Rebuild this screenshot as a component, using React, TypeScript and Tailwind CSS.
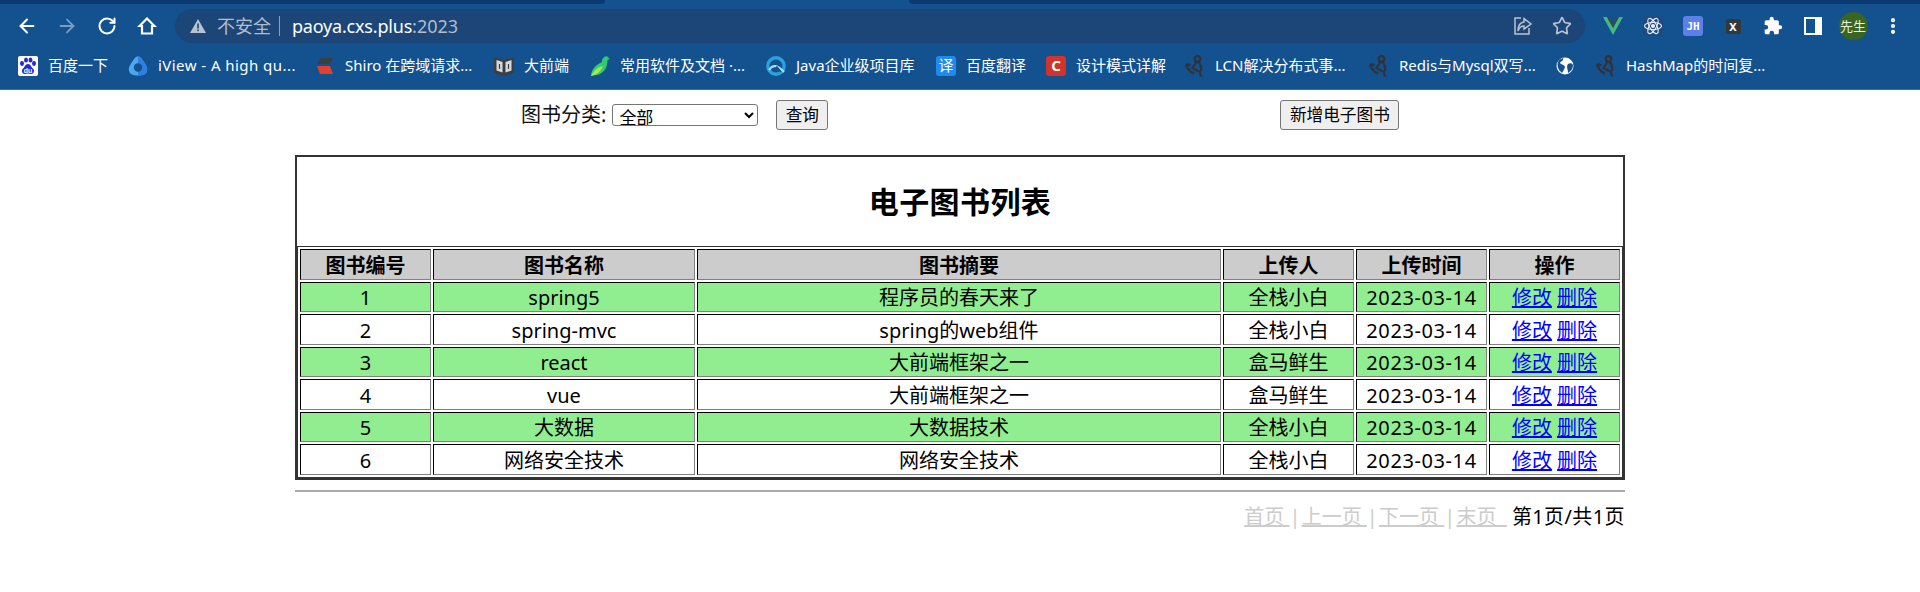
import React from "react";
import { ArrowLeft, ArrowRight, RotateCw, Star, MoreVertical } from "lucide-react";

const Anchor = () => (
  <svg viewBox="0 0 20 22" className="w-[20px] h-[22px]" fill="none" stroke="#2f3338" strokeWidth="2.200">
    <circle cx="12.500" cy="4" r="2.800" />
    <path d="M11.500 7 L7.500 13 L15 17 L16 21.500 M2 9 C2 14 5 17 9 18.500 M13.500 7 C15.500 9 16.500 12 16 16 M2 9 L0.500 11.500 M2 9 L5.500 10.500" />
  </svg>
);

const Baidu = () => (
  <svg viewBox="0 0 20 20" className="w-5 h-5">
    <rect width="20" height="20" rx="2" fill="#fff" />
    <g fill="#2529d8">
      <ellipse cx="4" cy="7.500" rx="2" ry="2.400" />
      <ellipse cx="8" cy="4" rx="2" ry="2.500" />
      <ellipse cx="12.500" cy="4" rx="2" ry="2.500" />
      <ellipse cx="16" cy="7.500" rx="2" ry="2.400" />
      <path d="M10 8c3 0 3 3 5 4.500 2 2 1 5.500-2 5.500-1 0-2-.4-3-.4s-2 .4-3 .4c-3 0-4-3.500-2-5.500 2-1.500 2-4.500 5-4.500z" />
    </g>
    <text x="10" y="16.500" textAnchor="middle" fontSize="7" fontWeight="700" fill="#fff" fontFamily="Liberation Sans, sans-serif">du</text>
  </svg>
);

const IView = () => (
  <svg viewBox="0 0 20 20" className="w-5 h-5">
    <path d="M10 0.500 C13 0.500 14 3 16 6 C18 9 20 12 19 15 C18 18.500 15 19.500 10 19.500 C5 19.500 2 18.500 1 15 C0 12 2 9 4 6 C6 3 7 0.500 10 0.500z" fill="#4aa8ee" />
    <path d="M10 0.500 C13 0.500 14 3 16 6 C18 9 20 12 19 15 C18 18.500 15 19.500 10 19.500 z" fill="#2f7fe0" />
    <circle cx="10" cy="11.500" r="4.200" fill="#14518f" />
  </svg>
);

const Shiro = () => (
  <svg viewBox="0 0 20 20" className="w-5 h-5">
    <path d="M6 2 H18 L15 8 H2z" fill="#3a3f46" />
    <path d="M2 10 H15 L18 18 H5z" fill="#e0402c" />
  </svg>
);

const BookIcon = () => (
  <svg viewBox="0 0 20 20" className="w-5 h-5">
    <path d="M0 1 L10 4 L20 1 V17 L10 20 L0 17z" fill="#3a3f46" />
    <path d="M2.500 4 L8.500 6 V16.500 L2.500 14.500z M17.500 4 L11.500 6 V16.500 L17.500 14.500z" fill="#d9d9d9" />
    <path d="M5.500 8 V13 M14.500 8 V13" stroke="#3a3f46" strokeWidth="1.200" />
  </svg>
);

const Bird = () => (
  <svg viewBox="0 0 22 24" className="w-[22px] h-[24px]">
    <path d="M1 23 C2 14 8 10 13 8 C13 4 16 0.500 19 1.500 L21.500 4 L19 6 C20 14 13 23 5 22z" fill="#2ecc71" />
    <path d="M1 23 C5 16 9 13 14 12 C13 17 8 22 1 23z" fill="#a8e84c" />
  </svg>
);

const JavaIcon = () => (
  <svg viewBox="0 0 20 20" className="w-5 h-5" fill="none">
    <circle cx="10" cy="10" r="8.200" stroke="#29a3dc" strokeWidth="3.400" />
    <path d="M3 14 C7 8 11 9 18 16" stroke="#a9dcf5" strokeWidth="2.200" />
    <path d="M8 15 L11 11 L15 16" stroke="#14518f" strokeWidth="1.500" />
  </svg>
);

const BoxGlyph = ({ bg, ch, bold }: { bg: string; ch: string; bold?: boolean }) => (
  <span className={`w-5 h-5 rounded-[3px] flex items-center justify-center text-white text-[15px] leading-none ${bg} ${bold ? "font-bold" : ""}`}>{ch}</span>
);

const Globe = () => (
  <svg viewBox="0 0 18 18" className="w-[18px] h-[18px]">
    <circle cx="9" cy="9" r="8.500" fill="#fff" />
    <path d="M7 1 C8 4 5 4 4 6 C5 8 8 7 9 10 C8 13 7 14 6 16 L3 13 C1 10 1 6 3 3z M12 7 C14 6 16 6 17 8 C17 12 15 14 12 16 C12 12 10 10 12 7z" fill="#14518f" />
  </svg>
);

const bookmarks: { icon: React.ReactNode; text: string; box: string; w: string; t?: string }[] = [
  { icon: <Baidu />, text: "百度一下", box: "ml-[18px]", w: "w-[60px]" },
  { icon: <IView />, text: "iView - A high qu...", box: "ml-[20px]", w: "w-[136px]", t: "tracking-[0.45px]" },
  { icon: <Shiro />, text: "Shiro 在跨域请求...", box: "ml-[21px]", w: "w-[130px]" },
  { icon: <BookIcon />, text: "大前端", box: "ml-[19px]", w: "w-[46px]" },
  { icon: <Bird />, text: "常用软件及文档 ·...", box: "ml-[20px]", w: "w-[127px]" },
  { icon: <JavaIcon />, text: "Java企业级项目库", box: "ml-[19px]", w: "w-[120px]" },
  { icon: <BoxGlyph bg="bg-[#1e8bf0]" ch="译" />, text: "百度翻译", box: "ml-[20px]", w: "w-[60px]" },
  { icon: <BoxGlyph bg="bg-[#d0342a]" ch="C" bold />, text: "设计模式详解", box: "ml-[20px]", w: "w-[90px]" },
  { icon: <Anchor />, text: "LCN解决分布式事...", box: "ml-[19px]", w: "w-[132px]" },
  { icon: <Anchor />, text: "Redis与Mysql双写...", box: "ml-[22px]", w: "w-[139px]" },
  { icon: <Globe />, text: "", box: "ml-[17px]", w: "w-0" },
  { icon: <Anchor />, text: "HashMap的时间复...", box: "ml-[11px]", w: "w-[141px]" },
];

const rows = [
  ["1", "spring5", "程序员的春天来了", "全栈小白"],
  ["2", "spring-mvc", "spring的web组件", "全栈小白"],
  ["3", "react", "大前端框架之一", "盒马鲜生"],
  ["4", "vue", "大前端框架之一", "盒马鲜生"],
  ["5", "大数据", "大数据技术", "全栈小白"],
  ["6", "网络安全技术", "网络安全技术", "全栈小白"],
];

const cell = "border border-t-black border-l-black border-r-[#808080] border-b-[#808080] p-0 pt-[2px] text-center leading-none";
const headers = ["图书编号", "图书名称", "图书摘要", "上传人", "上传时间", "操作"];

const Btn = ({ children, className }: { children: React.ReactNode; className: string }) => (
  <button className={`h-[30px] bg-[#efefef] border border-[#767676] rounded-[3px] text-[16.67px] leading-none text-black ${className}`}>{children}</button>
);

const Sep = () => <span className="inline-block w-[7px] text-center">|</span>;

export default function App() {
  return (
    <div className="min-h-[592px] bg-white text-black font-['Noto_Sans','Noto_Sans_CJK_SC',sans-serif]">
      {/* browser chrome */}
      <div className="bg-[#14518f]">
        <div className="flex h-[4px]">
          <div className="w-[605px] bg-[#0b3a73] rounded-br-[6px]" />
          <div className="w-[304px]" />
          <div className="flex-1 bg-[#0b3a73] rounded-bl-[6px]" />
        </div>
        <div className="flex items-center h-[40px] pt-[4px] pl-[7px] pr-[7px]">
          <div className="w-10 flex justify-center"><ArrowLeft size={22} strokeWidth={2.2} color="#fff" /></div>
          <div className="w-10 flex justify-center"><ArrowRight size={22} strokeWidth={2} color="#7b9cc2" /></div>
          <div className="w-10 flex justify-center"><RotateCw size={20} strokeWidth={2.4} color="#fff" /></div>
          <div className="w-10 flex justify-center">
            <svg viewBox="0 0 20 20" className="w-5 h-5" fill="none" stroke="#fff" strokeWidth="2.200" strokeLinejoin="miter"><path d="M10 2.500 L2.500 10 H5 V17.500 H15 V10 H17.500z" /></svg>
          </div>
          <div className="ml-2 w-[1410px] h-[34px] rounded-[17px] bg-[#1b4677] flex items-center text-[18px] leading-none pl-[15px]">
            <svg viewBox="0 0 16 15" className="w-4 h-4" fill="#b9c3d0"><path d="M8 0.500 L16 14.500 H0z" /><rect x="7.200" y="5" width="1.600" height="5" fill="#1b4677" /><rect x="7.200" y="11" width="1.600" height="1.600" fill="#1b4677" /></svg>
            <span className="ml-[11px] text-[#b3bdca] w-[54px]">不安全</span>
            <span className="ml-[8px] w-px h-[20px] bg-[#8ea0b6]" />
            <span className="ml-[12px] text-white tracking-[-0.2px]">paoya.cxs.plus</span>
            <span className="text-[#b3bdca]">:2023</span>
            <div className="ml-auto flex items-center gap-[19px] pr-[13px]">
              <svg viewBox="0 0 20 20" className="w-5 h-5" fill="none" stroke="#b9c3d0" strokeWidth="1.500"><path d="M8 2 H2 V18 H16 V12" /><path d="M11 2.500 L18 8 L11 13 V10 C8 10 6 12 5 15 C5 10 7 6.500 11 6z" /></svg>
              <Star size={20} strokeWidth={2} color="#b9c3d0" />
            </div>
          </div>
          <div className="ml-2 w-10 flex justify-center">
            <svg viewBox="0 0 20 18" className="w-5 h-[18px]"><path d="M0 0 H4 L10 11 L16 0 H20 L10 18z" fill="#42b883" /><path d="M4 0 H7 L10 5 L13 0 H16 L10 11z" fill="#35495e" /></svg>
          </div>
          <div className="w-10 flex justify-center">
            <svg viewBox="0 0 20 20" className="w-5 h-5" fill="none" stroke="#e8eef5" strokeWidth="1.100"><rect width="20" height="20" fill="#1d4a80" stroke="none" /><ellipse cx="10" cy="10" rx="8.500" ry="3.500" /><ellipse cx="10" cy="10" rx="8.500" ry="3.500" transform="rotate(60 10 10)" /><ellipse cx="10" cy="10" rx="8.500" ry="3.500" transform="rotate(120 10 10)" /><circle cx="10" cy="10" r="1.500" fill="#e8eef5" /></svg>
          </div>
          <div className="w-10 flex justify-center">
            <span className="w-5 h-5 rounded-[3px] bg-[#5c7fe8] text-white text-[11px] font-bold leading-none flex items-center justify-center font-['DejaVu_Sans_Mono',monospace]">JH</span>
          </div>
          <div className="w-10 flex justify-center">
            <span className="w-[15px] h-[15px] rounded-[2px] bg-[#33383d] text-white text-[11px] font-bold leading-none flex items-center justify-center">X</span>
          </div>
          <div className="w-10 flex justify-center">
            <svg viewBox="0 0 24 24" className="w-[20px] h-[20px]" fill="#fff"><path d="M20.500 11H19V7a2 2 0 0 0-2-2h-4V3.500a2.500 2.500 0 0 0-5 0V5H4a2 2 0 0 0-2 2v3.800h1.500a2.700 2.700 0 0 1 0 5.400H2V20a2 2 0 0 0 2 2h3.800v-1.500a2.700 2.700 0 0 1 5.400 0V22H17a2 2 0 0 0 2-2v-4h1.500a2.500 2.500 0 0 0 0-5z" /></svg>
          </div>
          <div className="w-10 flex justify-center">
            <div className="w-[18px] h-[18px] border-[2.5px] border-white border-r-[7px]" />
          </div>
          <div className="w-10 flex justify-center">
            <span className="w-[29px] h-[28px] rounded-full bg-[#38651f] text-[#e8efe2] text-[13px] leading-none flex items-center justify-center">先生</span>
          </div>
          <div className="w-10 flex justify-center"><MoreVertical size={20} strokeWidth={3} color="#fff" /></div>
        </div>
        <div className="flex items-center h-[46px] pb-[2px] border-b border-b-[#3a6da6] text-white text-[15px] leading-none whitespace-nowrap">
          {bookmarks.map((b, i) => (
            <div key={i} className={`flex items-center shrink-0 ${b.box}`}>
              <div className="w-5 flex justify-center">{b.icon}</div>
              <span className={`ml-[10px] ${b.w} ${b.t ?? ""}`}>{b.text}</span>
            </div>
          ))}
        </div>
      </div>

      {/* page */}
      <div className="w-[1330px] mx-auto">
        <div className="flex items-center pt-[10px] h-[40px] text-[20px] leading-none whitespace-nowrap">
          <span className="ml-[226px] text-[#111]">图书分类:</span>
          <select defaultValue="全部" className="ml-[6px] w-[146px] h-[22px] pl-[2px] bg-white border border-[#767676] rounded-[3px] text-[17px] leading-[20px]">
            <option>全部</option>
          </select>
          <Btn className="ml-[18px] w-[52px]">查询</Btn>
          <Btn className="ml-[452px] w-[119px]">新增电子图书</Btn>
        </div>

        <div className="mt-[25px] border-2 border-[#333]">
          <h2 className="h-[89px] flex items-center justify-center text-[30px] tracking-[0.4px] font-bold leading-none">电子图书列表</h2>
          <table className="w-full table-fixed border border-[#333] border-separate border-spacing-[2px] text-[20px]">
            <colgroup>
              <col className="w-[131px]" />
              <col className="w-[262px]" />
              <col className="w-[524px]" />
              <col className="w-[131px]" />
              <col className="w-[131px]" />
              <col className="w-[131px]" />
            </colgroup>
            <thead>
              <tr className="h-[31px] bg-[#ccc]">
                {headers.map((h) => (
                  <th key={h} className={`${cell} font-bold`}>{h}</th>
                ))}
              </tr>
            </thead>
            <tbody>
              {rows.map((r, i) => (
                <tr key={r[0]} className={`${i % 2 === 0 ? "h-[30px] bg-[#90ee90]" : "h-[31px] bg-white"}`}>
                  {r.map((c, j) => (
                    <td key={j} className={cell}>{c}</td>
                  ))}
                  <td className={`${cell} tracking-[0.6px]`}>2023-03-14</td>
                  <td className={cell}>
                    <a href="#" className="text-[#00f] underline">修改</a>{" "}
                    <a href="#" className="text-[#00f] underline">删除</a>
                  </td>
                </tr>
              ))}
            </tbody>
          </table>
        </div>

        <div className="mt-[10px] h-[2px] bg-[#aaa]" />
        <div className="mt-[10px] text-right text-[20px] leading-[30px] text-[#ccc] whitespace-pre">
          <a href="#" className="underline">首页 </a><Sep /><span> </span>
          <a href="#" className="underline">上一页 </a><Sep /><span> </span>
          <a href="#" className="underline">下一页 </a><Sep /><span> </span>
          <a href="#" className="underline">末页  </a>
          <span className="ml-[5px] text-black tracking-[0.4px]">第1页/共1页</span>
        </div>
      </div>
    </div>
  );
}
